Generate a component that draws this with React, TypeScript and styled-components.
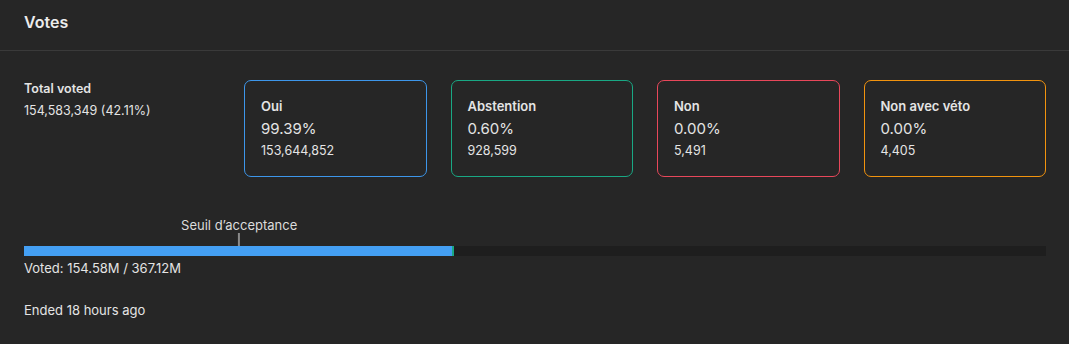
import { createGlobalStyle } from "styled-components"
import styled from "styled-components"

const GlobalStyle = createGlobalStyle`
  body {
    margin: 0;
    background: #262626;
    font-family: Inter, "Open Sans", sans-serif;
    color: #e4e4e4;
  }
`

const options = [
  { label: "Oui", pct: "99.39%", count: "153,644,852", color: "#3d96ea", bar: "#449ff3", share: 99.39 },
  { label: "Abstention", pct: "0.60%", count: "928,599", color: "#19a884", bar: "#19a884", share: 0.6 },
  { label: "Non", pct: "0.00%", count: "5,491", color: "#e8475a", bar: "#e8475a", share: 0.0036 },
  { label: "Non avec véto", pct: "0.00%", count: "4,405", color: "#f2930e", bar: "#f2930e", share: 0.0029 },
]

const turnout = 42.11
const threshold = 50

export default function App() {
  return (
    <>
      <GlobalStyle />
      <Panel>
        <Header>Votes</Header>
        <Body>
          <Summary>
            <TotalBlock>
              <TotalLabel>Total voted</TotalLabel>
              <TotalValue>154,583,349 (42.11%)</TotalValue>
            </TotalBlock>
            <Cards>
              {options.map((o) => (
                <Card key={o.label} $color={o.color}>
                  <CardLabel>{o.label}</CardLabel>
                  <CardPct>{o.pct}</CardPct>
                  <CardCount>{o.count}</CardCount>
                </Card>
              ))}
            </Cards>
          </Summary>

          <BarSection>
            <ThresholdRow>
              <Threshold style={{ left: `${(turnout * threshold) / 100}%` }}>
                <ThresholdLabel>Seuil d’acceptance</ThresholdLabel>
                <ThresholdTick />
              </Threshold>
            </ThresholdRow>
            <Track>
              {options.map((o) => (
                <Segment
                  key={o.label}
                  $color={o.bar}
                  style={{ width: `${(turnout * o.share) / 100}%` }}
                />
              ))}
            </Track>
            <VotedText>Voted: 154.58M / 367.12M</VotedText>
          </BarSection>

          <Ended>Ended 18 hours ago</Ended>
        </Body>
      </Panel>
    </>
  )
}

const Panel = styled.div`
  width: 100%;
  min-height: 344px;
  background: #262626;
`
const Header = styled.div`
  height: 51px;
  box-sizing: border-box;
  padding: 12px 24px 0;
  font-size: 16px;
  font-weight: 600;
  color: #ececec;
  border-bottom: 1px solid #3a3a3a;
`
const Body = styled.div`
  padding: 29px 23px 0 24px;
`
const Summary = styled.div`
  display: flex;
`
const TotalBlock = styled.div`
  width: 220px;
  flex-shrink: 0;
  padding-top: 1px;
`
const TotalLabel = styled.div`
  font-size: 12.5px;
  font-weight: 600;
  line-height: 16px;
`
const TotalValue = styled.div`
  margin-top: 6px;
  font-size: 12.5px;
  line-height: 16px;
`
const Cards = styled.div`
  flex: 1;
  display: grid;
  grid-template-columns: repeat(4, 1fr);
  gap: 24px;
`
const Card = styled.div<{ $color: string }>`
  height: 97px;
  box-sizing: border-box;
  border: 1px solid ${(p) => p.$color};
  border-radius: 7px;
  padding: 17px 16px 0;
`
const CardLabel = styled.div`
  font-size: 13px;
  font-weight: 600;
  line-height: 16px;
`
const CardPct = styled.div`
  margin-top: 5px;
  font-size: 15px;
  line-height: 20px;
`
const CardCount = styled.div`
  margin-top: 4px;
  font-size: 12.5px;
  line-height: 16px;
`
const BarSection = styled.div`
  margin-top: 40px;
`
const ThresholdRow = styled.div`
  position: relative;
  height: 29px;
`
const Threshold = styled.div`
  position: absolute;
  top: 0;
  bottom: 0;
  display: flex;
  flex-direction: column;
  align-items: center;
  transform: translateX(-50%);
`
const ThresholdLabel = styled.div`
  font-size: 13px;
  line-height: 16px;
  white-space: nowrap;
  color: #dcdcdc;
`
const ThresholdTick = styled.div`
  flex: 1;
  width: 2px;
  background: #8a8a8a;
`
const Track = styled.div`
  height: 10px;
  display: flex;
  background: #1e1e1e;
`
const Segment = styled.div<{ $color: string }>`
  height: 100%;
  background: ${(p) => p.$color};
`
const VotedText = styled.div`
  margin-top: 4px;
  font-size: 13px;
  line-height: 16px;
`
const Ended = styled.div`
  margin-top: 26px;
  font-size: 13px;
  line-height: 16px;
`
